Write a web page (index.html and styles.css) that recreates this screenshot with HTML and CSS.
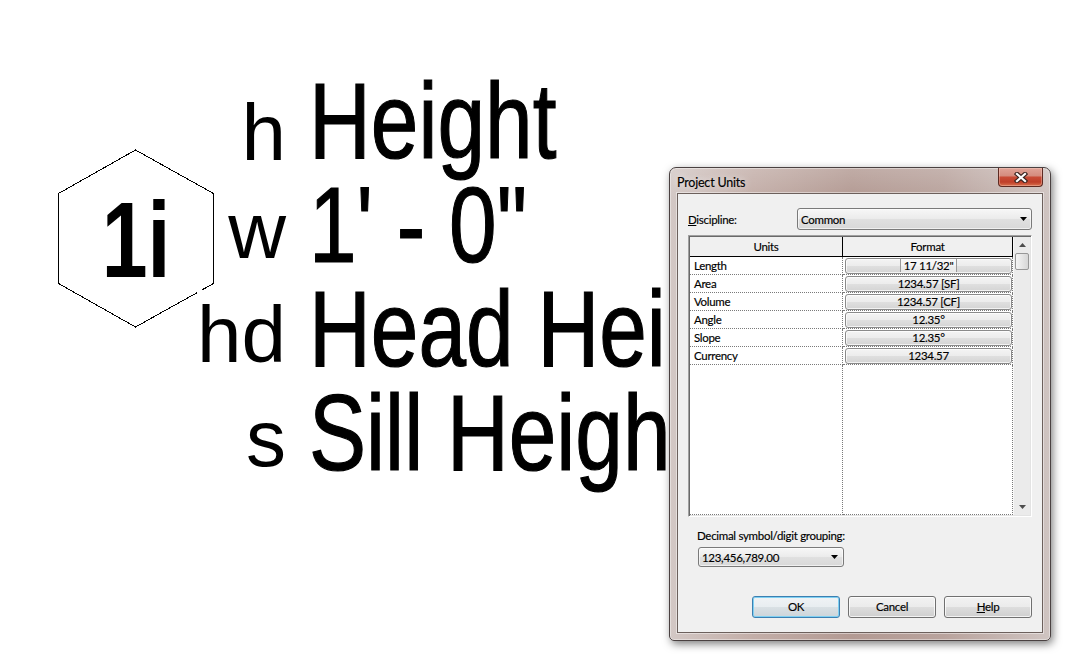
FILE: index.html
```html
<!DOCTYPE html>
<html>
<head>
<meta charset="utf-8">
<title>Project Units</title>
<link rel="stylesheet" href="styles.css">
</head>
<body>
<div class="canvas">
  <svg class="tag" width="160" height="182" viewBox="0 0 160 182">
    <polygon points="79.5,2 157.5,45.5 157.5,135.5 79.5,179 2.5,135.5 2.5,45.5" fill="none" stroke="#000" stroke-width="1" shape-rendering="crispEdges"/>
    <text x="80" y="129" text-anchor="middle" class="tag-text" transform="translate(80 0) scale(0.77 1) translate(-80 0)">1i</text>
  </svg>
  <div class="schedule">
    <div class="row r1"><span class="key"><span class="mask">h</span></span><span class="val">Height</span></div>
    <div class="row"><span class="key"><span class="mask">w</span></span><span class="val">1' - 0"</span></div>
    <div class="row"><span class="key"><span class="mask">hd</span></span><span class="val">Head Hei</span></div>
    <div class="row"><span class="key"><span class="mask">s</span></span><span class="val">Sill Heigh</span></div>
  </div>
</div>

<div class="window">
  <div class="titlebar"><span class="title">Project Units</span></div>
  <div class="close">
    <svg width="14" height="11" viewBox="0 0 14 11">
      <path d="M3 2 L11 9 M11 2 L3 9" stroke="#3a2420" stroke-width="4.4" stroke-linecap="square"/>
      <path d="M3 2 L11 9 M11 2 L3 9" stroke="#fff" stroke-width="2.2" stroke-linecap="square"/>
    </svg>
  </div>
  <div class="client">
    <div class="field">
      <span class="flabel"><u>D</u>iscipline:</span>
      <div class="combo wide"><span>Common</span>
        <svg width="7" height="4" viewBox="0 0 7 4"><polygon points="0,0 7,0 3.5,4" fill="#000"/></svg>
      </div>
    </div>
    <div class="grid">
      <div class="table">
        <div class="thead">
          <div class="th c1">Units</div>
          <div class="th c2">Format</div>
        </div>
        <div class="tr"><div class="td c1">Length</div><div class="td c2"><div class="fbtn"><span class="edit">17 11/32"</span></div></div></div>
        <div class="tr"><div class="td c1">Area</div><div class="td c2"><div class="fbtn">1234.57 [SF]</div></div></div>
        <div class="tr"><div class="td c1">Volume</div><div class="td c2"><div class="fbtn">1234.57 [CF]</div></div></div>
        <div class="tr"><div class="td c1">Angle</div><div class="td c2"><div class="fbtn">12.35°</div></div></div>
        <div class="tr"><div class="td c1">Slope</div><div class="td c2"><div class="fbtn">12.35°</div></div></div>
        <div class="tr"><div class="td c1">Currency</div><div class="td c2"><div class="fbtn">1234.57</div></div></div>
        <div class="tr fill"><div class="td c1"></div><div class="td c2"></div></div>
      </div>
      <div class="vscroll">
        <div class="sb-btn"><svg width="7" height="4" viewBox="0 0 7 4"><polygon points="3.5,0 7,4 0,4" fill="#4d4d4d"/></svg></div>
        <div class="thumb"></div>
        <div class="track"></div>
        <div class="sb-btn"><svg width="7" height="4" viewBox="0 0 7 4"><polygon points="0,0 7,0 3.5,4" fill="#4d4d4d"/></svg></div>
      </div>
    </div>
    <div class="dlabel">Decimal symbol/digit <u>g</u>rouping:</div>
    <div class="combo small"><span>123,456,789.00</span>
      <svg width="7" height="4" viewBox="0 0 7 4"><polygon points="0,0 7,0 3.5,4" fill="#000"/></svg>
    </div>
    <div class="buttons">
      <div class="btn default">OK</div>
      <div class="btn">Cancel</div>
      <div class="btn"><u>H</u>elp</div>
    </div>
  </div>
</div>
</body>
</html>
```

FILE: styles.css
```css
html, body {
  margin: 0;
  padding: 0;
  background: #fff;
}
body {
  width: 1090px;
  height: 671px;
  overflow: hidden;
  position: relative;
  font-family: "Liberation Sans", Arial, sans-serif;
  color: #000;
}

/* drawing canvas */
.canvas {
  position: relative;
  height: 671px;
  box-sizing: border-box;
  padding: 69px 0 0 180px;
}
.tag {
  position: absolute;
  left: 56px;
  top: 148px;
  z-index: 0;
}
.tag-text {
  font-family: "Liberation Sans", Arial, sans-serif;
  font-weight: bold;
  font-size: 107px;
  fill: #000;
}
.schedule {
  position: relative;
  z-index: 1;
  font-size: 107px;
  line-height: 104px;
  white-space: nowrap;
}
.row {
  height: 104px;
}
.key {
  display: inline-block;
  width: 106px;
  text-align: right;
  font-size: 80px;
  vertical-align: 4px;
}
.r1 .key {
  vertical-align: -2px;
}
.mask {
  background: #fff;
}
.val {
  display: inline-block;
  margin-left: 23px;
  transform: scaleX(0.8);
  transform-origin: 0 0;
  -webkit-text-stroke: 1.2px #000;
}

/* dialog window */
.window {
  position: absolute;
  left: 669px;
  top: 167px;
  width: 382px;
  height: 474px;
  box-sizing: border-box;
  border: 1px solid #4a4141;
  border-radius: 7px 7px 5px 5px;
  padding: 0 7px 7px;
  display: flex;
  flex-direction: column;
  background:
    linear-gradient(rgba(255,255,255,0.18), rgba(255,255,255,0) 30px),
    linear-gradient(to right, #d3c8c5 0%, #c3aea8 22%, #b39a93 48%, #b9a39d 72%, #cfc4c1 100%);
  box-shadow: inset 0 0 0 1px rgba(255,255,255,0.4), 2px 3px 9px rgba(0,0,0,0.5);
  font-family: Lato, "Liberation Sans", sans-serif;
  font-size: 11.5px;
  letter-spacing: -0.3px;
  -webkit-text-stroke: 0.15px #000;
  z-index: 5;
}
.titlebar {
  height: 25px;
  box-sizing: border-box;
  padding-top: 3px;
  display: flex;
  align-items: center;
}
.title {
  font-size: 12.5px;
  letter-spacing: -0.2px;
  text-shadow: 0 0 7px rgba(255,255,255,0.9);
}
.close {
  position: absolute;
  top: 0;
  right: 7px;
  width: 45px;
  height: 19px;
  box-sizing: border-box;
  border: 1px solid #5e2a21;
  border-top: none;
  border-radius: 0 0 4px 4px;
  background: linear-gradient(#e0a397 0%, #d58c7e 42%, #c84a35 52%, #bf3f29 78%, #d9714f 100%);
  box-shadow: inset 0 0 0 1px rgba(255,220,210,0.35);
  display: flex;
  align-items: center;
  justify-content: center;
}
.client {
  flex: 1;
  border: 1px solid #6c605c;
  background: #f0f0f0;
  box-sizing: border-box;
  padding: 14px 10px 0 10px;
  display: flex;
  flex-direction: column;
  box-shadow: 0 0 0 1px rgba(255,255,255,0.45);
}
.field {
  display: flex;
  align-items: center;
  height: 22px;
}
.flabel {
  width: 109px;
}
.combo {
  box-sizing: border-box;
  border: 1px solid #7a7a7a;
  border-radius: 3px;
  background: linear-gradient(#f7f7f7, #ebebeb 50%, #e0e0e0 51%, #d8d8d8);
  box-shadow: inset 0 0 0 1px rgba(255,255,255,0.6);
  display: flex;
  align-items: center;
  justify-content: space-between;
  padding: 0 4px 0 3px;
}
.combo.wide {
  flex: 1;
  height: 22px;
}
.combo.small {
  width: 146px;
  height: 20px;
  margin: 4px 0 0 10px;
  padding-right: 5px;
}

/* grid */
.grid {
  margin-top: 5px;
  height: 282px;
  box-sizing: border-box;
  border: 1px solid;
  border-color: #a0a0a0 #ffffff #ffffff #a0a0a0;
  box-shadow: inset 1px 1px 0 #696969, inset -1px -1px 0 #e3e3e3;
  padding: 1px;
  background: #fff;
  display: flex;
}
.table {
  width: 323px;
  display: flex;
  flex-direction: column;
}
.thead {
  display: flex;
  height: 20px;
  box-sizing: border-box;
  border-bottom: 1px solid #000;
  background: #f0f0f0;
}
.th {
  box-sizing: border-box;
  text-align: center;
  line-height: 19px;
}
.c1 {
  width: 153px;
  border-right: 1px solid #000;
}
.c2 {
  width: 170px;
  border-right: 1px solid #000;
}
.tr {
  display: flex;
  height: 18px;
}
.td {
  box-sizing: border-box;
  border-bottom: 1px dotted #7a7a7a;
  border-right: 1px dotted #7a7a7a;
  line-height: 17px;
}
.td.c1 {
  padding-left: 4px;
}
.td.c2 {
  padding: 1px 0 0 2px;
}
.tr.fill {
  flex: 1;
}
.fbtn {
  width: 167px;
  height: 16px;
  box-sizing: border-box;
  border: 1px solid #8a8a8a;
  border-radius: 3px;
  background: linear-gradient(#f4f4f4, #ececec 50%, #dfdfdf 51%, #d4d4d4);
  box-shadow: inset 0 0 0 1px rgba(255,255,255,0.7);
  text-align: center;
  line-height: 14px;
}
.edit {
  display: inline-block;
  padding: 0 3px;
  border-left: 1px solid #9a9a9a;
  border-right: 1px solid #9a9a9a;
  background: rgba(255,255,255,0.45);
  line-height: 13px;
}
.vscroll {
  width: 18px;
  background: #ebebeb;
  border-left: 1px solid #f8f8f8;
  box-sizing: border-box;
  display: flex;
  flex-direction: column;
  align-items: center;
}
.sb-btn {
  height: 16px;
  width: 100%;
  display: flex;
  align-items: center;
  justify-content: center;
}
.thumb {
  width: 14px;
  height: 17px;
  box-sizing: border-box;
  border: 1px solid #979797;
  border-radius: 2px;
  background: linear-gradient(to right, #f5f5f5, #e6e6e6 50%, #d6d6d6);
}
.track {
  flex: 1;
}

.dlabel {
  margin-top: 11px;
  padding-left: 9px;
  line-height: 15px;
}
.buttons {
  margin-top: 29px;
  display: flex;
  justify-content: flex-end;
  gap: 8px;
}
.btn {
  width: 88px;
  height: 22px;
  box-sizing: border-box;
  border: 1px solid #707070;
  border-radius: 3px;
  background: linear-gradient(#f2f2f2, #ebebeb 50%, #dddddd 51%, #cfcfcf);
  box-shadow: inset 0 0 0 1px rgba(255,255,255,0.75);
  text-align: center;
  line-height: 20px;
}
.btn.default {
  border-color: #3c7fb1;
  box-shadow: inset 0 0 0 1px #7fd0f2;
  background: linear-gradient(#f0f3f5, #e8edf0 50%, #d9e0e4 51%, #cdd5da);
}
```
